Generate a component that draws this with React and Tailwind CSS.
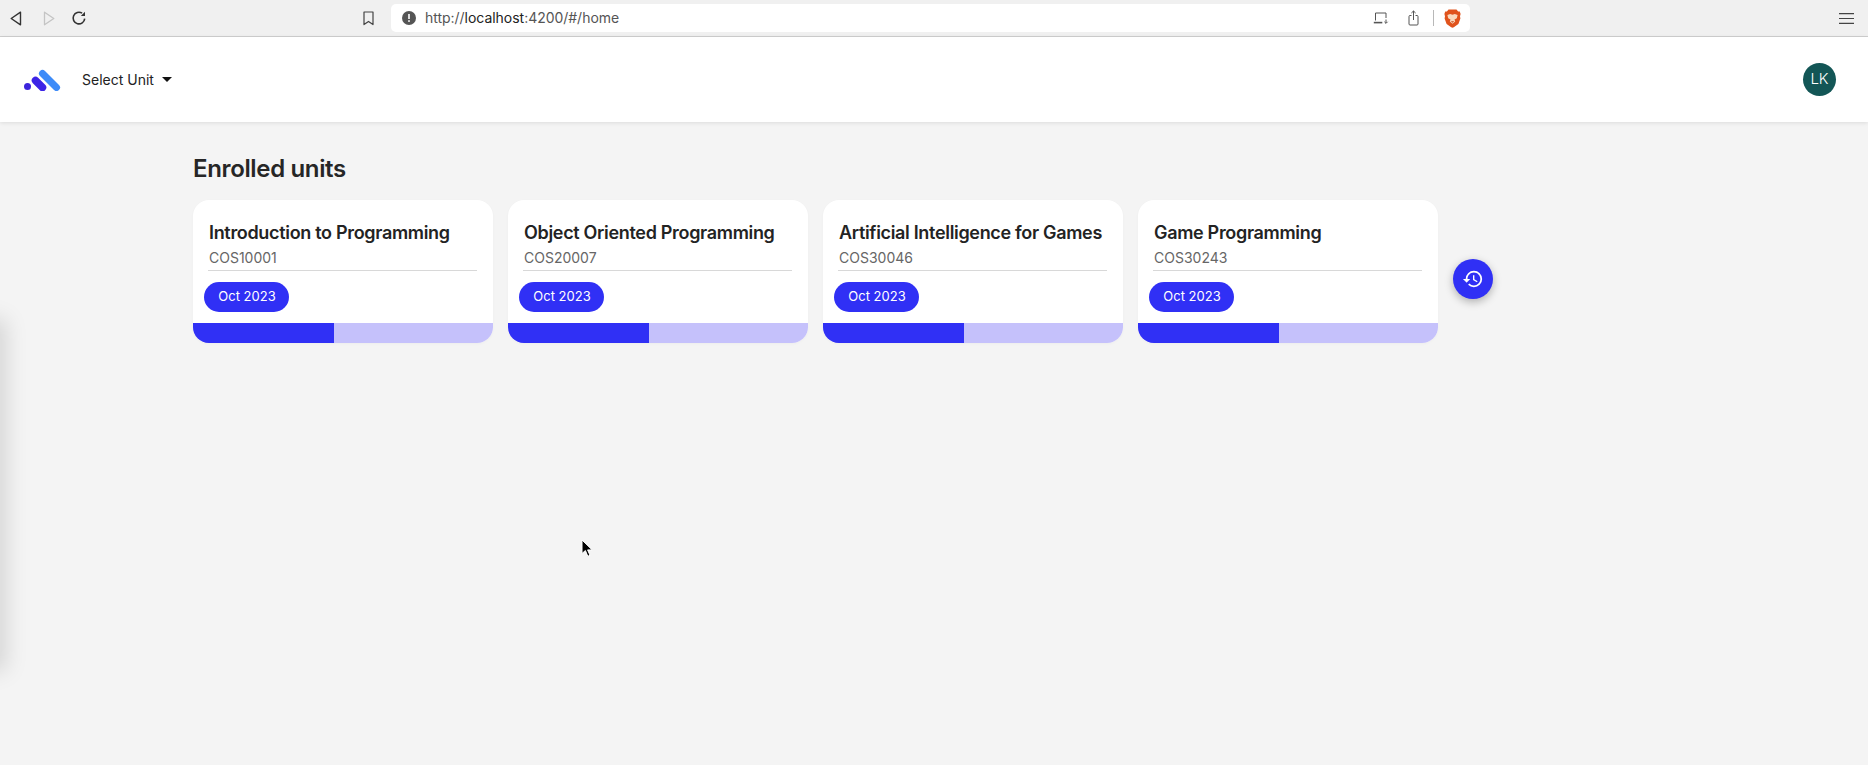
import React from 'react';

const units = [
  { title: 'Introduction to Programming', code: 'COS10001' },
  { title: 'Object Oriented Programming', code: 'COS20007' },
  { title: 'Artificial Intelligence for Games', code: 'COS30046' },
  { title: 'Game Programming', code: 'COS30243' },
];

const BrowserBar = () => (
  <div className="h-[37px] bg-[#f0f0f0] border-b border-[#cfcfcf] flex items-center relative shrink-0">
    <div className="flex items-center pl-[10px] w-[391px]">
      <svg width="12" height="15" viewBox="0 0 12 15" fill="none" stroke="#333" strokeWidth="1.4" strokeLinejoin="round"><path d="M10.5 1.2v12.6L1.2 7.5z" /></svg>
      <svg className="ml-[21px]" width="12" height="15" viewBox="0 0 12 15" fill="none" stroke="#c4c4c4" strokeWidth="1.3" strokeLinejoin="round"><path d="M1.5 1.2v12.6l9.3-6.3z" /></svg>
      <svg className="ml-[16px]" width="16" height="16" viewBox="0 0 16 16" fill="none" stroke="#333" strokeWidth="1.6"><path d="M13.7 8.6a5.8 5.8 0 1 1-2.6-5.4" /><path d="M14 1.8v4.2H9.8z" fill="#333" stroke="none" /></svg>
      <svg className="ml-[276px]" width="11" height="15" viewBox="0 0 11 15" fill="none" stroke="#444" strokeWidth="1.2" strokeLinejoin="round"><path d="M1 1h9v12.6L5.5 10.4 1 13.6z" /></svg>
    </div>
    <div className="w-[1079px] h-[28px] bg-white rounded-[5px] flex items-center pl-[11px] pr-[9px]">
      <svg width="14" height="14" viewBox="0 0 14 14"><circle cx="7" cy="7" r="7" fill="#555" /><rect x="6.2" y="3" width="1.6" height="5" fill="#fff" /><rect x="6.2" y="9.2" width="1.6" height="1.7" fill="#fff" /></svg>
      <span className="ml-[9px] text-[14px] leading-[20px] -mt-[1px] tracking-[-0.03px] text-[#555] whitespace-nowrap">
        http://<span className="text-[#222]">localhost</span>:4200/#/home
      </span>
      <div className="ml-auto flex items-center">
        <svg width="16" height="12" viewBox="0 0 16 12" fill="none" stroke="#555" strokeWidth="1"><path d="M2.5 8.5V1h10.5v5" /><path d="M.8 10.6h8.5" strokeWidth="1.6" /><path d="M13 7.5v3.6M11.4 9.8l1.6 1.6 1.6-1.6" /></svg>
        <svg className="ml-[19px]" width="11" height="16" viewBox="0 0 11 16" fill="none" stroke="#555" strokeWidth="1"><path d="M3.5 5.5H2a1 1 0 0 0-1 1v7.5a1 1 0 0 0 1 1h7a1 1 0 0 0 1-1V6.5a1 1 0 0 0-1-1H7.5" /><path d="M5.5 10V1M3.4 3l2.1-2 2.1 2" /></svg>
        <div className="ml-[14px] w-px h-[16px] bg-[#b8b8b8]" />
        <svg className="ml-[10px]" width="17" height="19" viewBox="0 0 17 19">
          <path d="M4.5.6h8l1.6 1.8 1.7.2.8 2.3-.6 2.3.4 2.2-2 5.6-4.6 3.200-1.300.5-1.300-.5-4.600-3.200-2-5.600.4-2.200-.6-2.300.8-2.300 1.700-.2z" fill="#e0531c" />
          <path d="M3.4 6l2.800-.9 2.300.6 2.300-.6 2.800.9-.8 3.200-2.300 1.300.7 2.100-2.700 2.200-2.700-2.200.7-2.100-2.300-1.300z" fill="#f9d9bd" />
          <path d="M6.8 12.2h3.400l-1.700 1.500z" fill="#c9471a" />
        </svg>
      </div>
    </div>
    <svg className="absolute right-[14px] top-[13px]" width="15" height="11" viewBox="0 0 15 11" stroke="#444" strokeWidth="1.2"><path d="M0 .6h15M0 5.5h15M0 10.4h15" /></svg>
  </div>
);

const UnitCard = ({ title, code }) => (
  <div className="w-[300px] h-[143px] bg-white rounded-[16px] overflow-hidden flex flex-col shadow-[0_1px_3px_rgba(0,0,0,0.03)]">
    <div className="flex-1 pt-[19px] px-[11px]">
      <h3 className="pl-[5px] text-[18px] leading-[27px] font-semibold text-[#232323] whitespace-nowrap tracking-[-0.32px]">{title}</h3>
      <p className="pl-[5px] text-[14px] leading-[20px] text-[#666] mt-[2px]">{code}</p>
      <div className="ml-[4px] mr-[5px] border-t border-[#d8d8d8] mt-[2px]" />
      <span className="mt-[11px] pl-[1px] w-[85px] h-[30px] rounded-full bg-[#3030f5] text-white text-[13px] flex items-center justify-center">Oct 2023</span>
    </div>
    <div className="h-[20px] flex bg-[#c5c1fb]">
      <div className="w-[47%] bg-[#3030f5]" />
    </div>
  </div>
);

const App = () => (
  <div className="h-[765px] w-full bg-[#f4f4f4] overflow-hidden relative flex flex-col font-['Inter',sans-serif]">
    <BrowserBar />
    <header className="h-[85px] bg-white flex items-center pl-[24px] pr-[32px] shrink-0 shadow-[0_1px_4px_rgba(0,0,0,0.1)] relative">
      <svg width="37" height="22" viewBox="0 0 37 22">
        <circle cx="3.5" cy="17.5" r="3.500" fill="#3c24dc" />
        <path d="M11.5 11.5l7 7" stroke="#3c24e6" strokeWidth="7.5" strokeLinecap="round" />
        <path d="M18.5 4.5l14 14" stroke="#3d8bf8" strokeWidth="7" strokeLinecap="round" />
      </svg>
      <span className="ml-[21px] text-[14px] text-[#222]">Select Unit</span>
      <span className="ml-[8px] w-0 h-0 border-x-[5px] border-x-transparent border-t-[5px] border-t-[#111]" />
      <div className="ml-auto w-[33px] h-[33px] rounded-full bg-[#135656] text-white text-[15px] font-light flex items-center justify-center">LK</div>
    </header>
    <main className="pl-[193px] pt-[31px]">
      <h1 className="text-[24px] leading-[32px] font-semibold text-[#262626] tracking-[-0.35px]">Enrolled units</h1>
      <div className="flex gap-[15px] mt-[15px] items-start">
        {units.map((u) => (
          <UnitCard key={u.code} title={u.title} code={u.code} />
        ))}
        <button className="mt-[59px] w-[40px] h-[40px] rounded-full bg-[#3030f5] flex items-center justify-center shadow-[0_3px_8px_rgba(0,0,0,0.28)]">
          <svg width="22" height="22" viewBox="0 0 24 24" fill="#fff"><path d="M13 3a9 9 0 0 0-9 9H1l3.89 3.89.07.14L9 12H6c0-3.87 3.13-7 7-7s7 3.13 7 7-3.13 7-7 7c-1.93 0-3.68-.79-4.94-2.06l-1.42 1.42A8.954 8.954 0 0 0 13 21a9 9 0 0 0 0-18zm-1 5v5l4.28 2.54.72-1.21-3.5-2.08V8H12z" /></svg>
        </button>
      </div>
    </main>
    {/* shadow of the collapsed side panel */}
    <div className="absolute left-[-20px] top-[325px] w-[20px] h-[340px] shadow-[0_0_22px_6px_rgba(0,0,0,0.13)]" />
    {/* mouse pointer */}
    <svg className="absolute left-[581px] top-[539px]" width="12" height="19" viewBox="0 0 12 19">
      <path d="M1 1v13.5l3.4-3 2.4 5.8 2.2-1-2.4-5.4h4.6z" fill="#000" stroke="#fff" strokeWidth="1" />
    </svg>
  </div>
);

export default App;
